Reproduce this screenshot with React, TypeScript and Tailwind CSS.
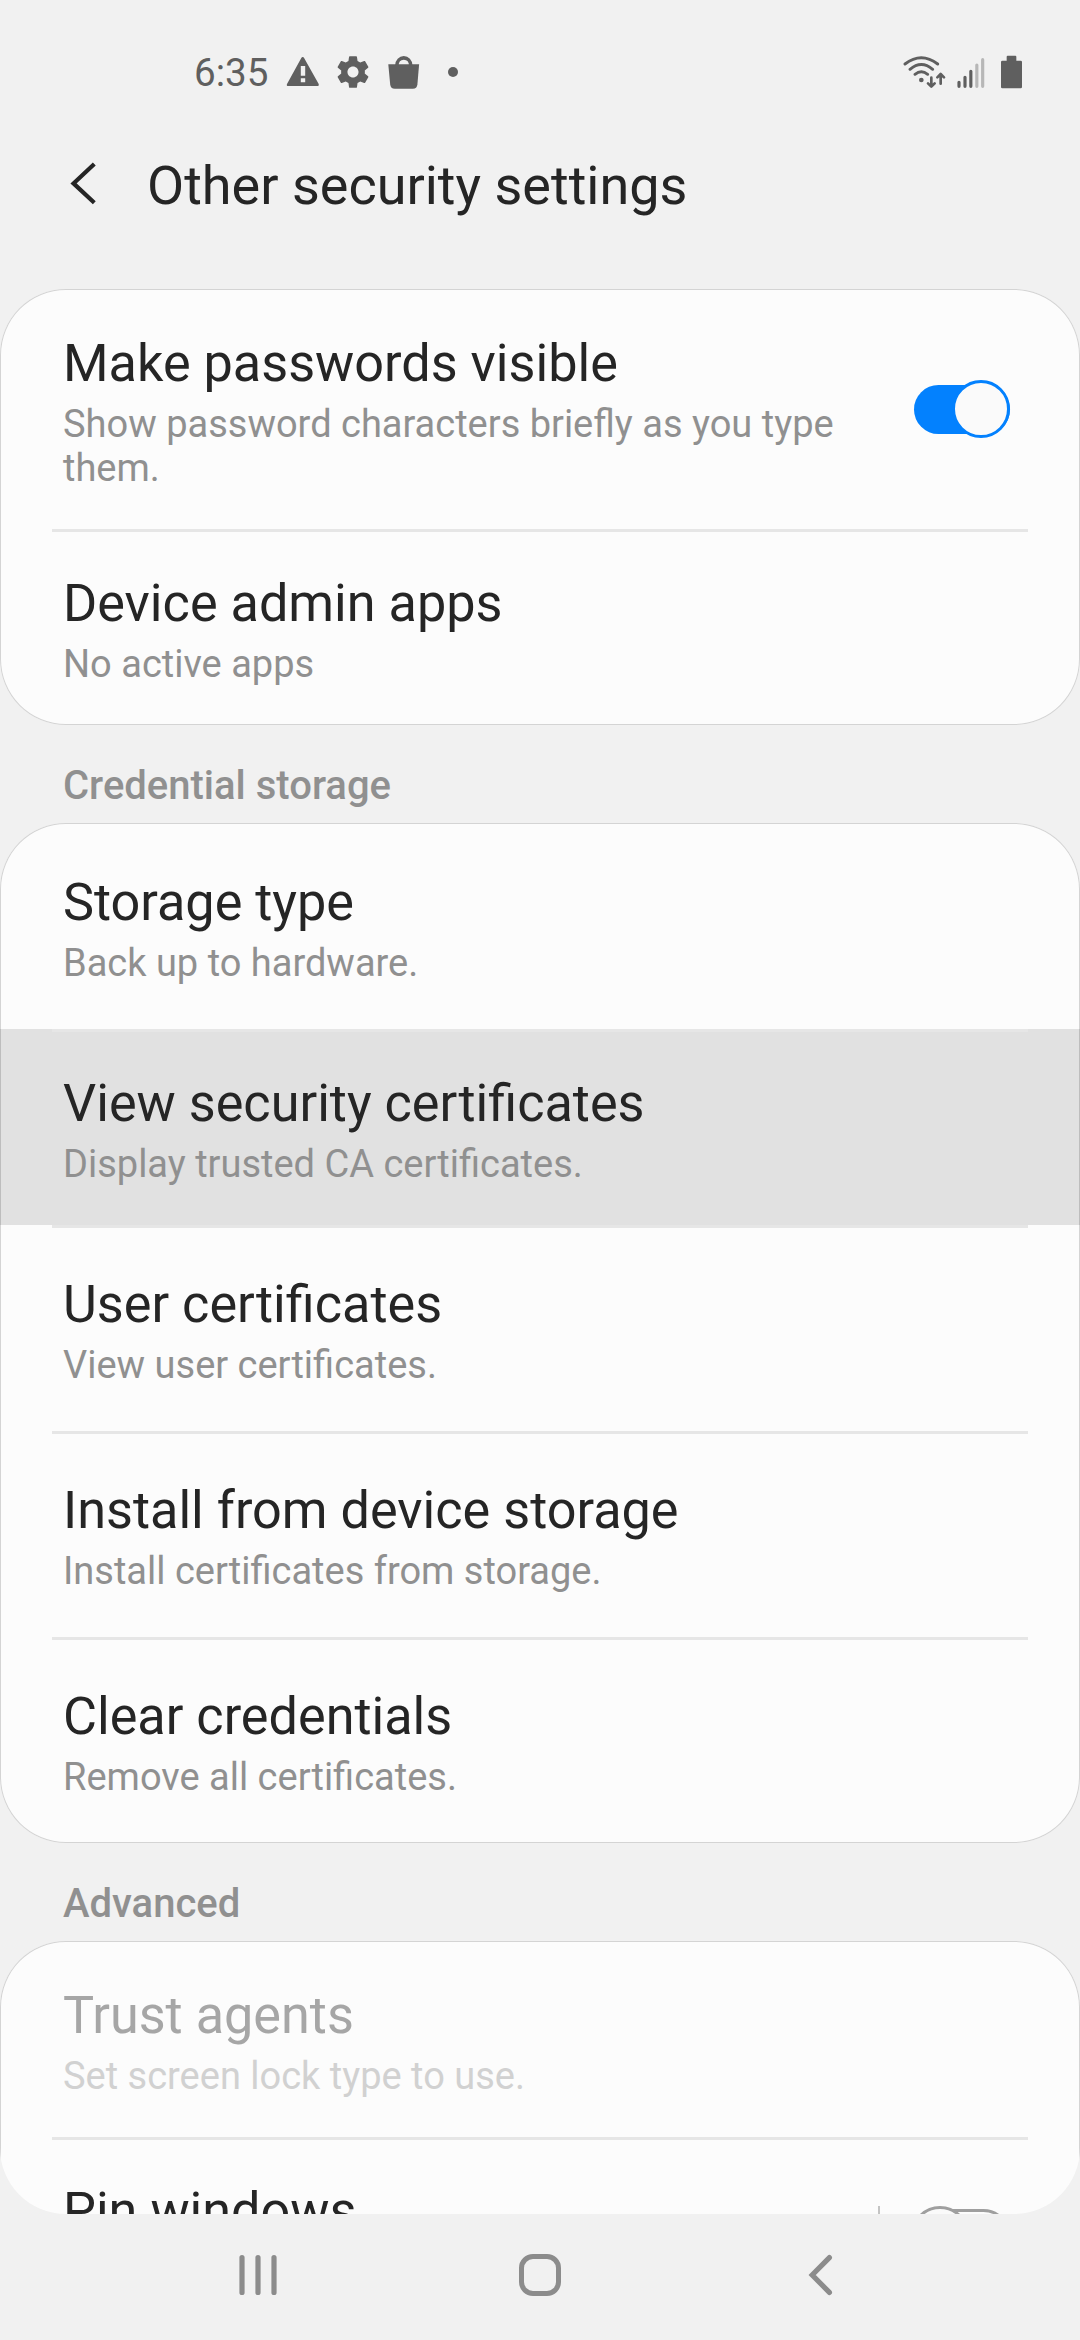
import type { ReactNode } from "react";

function StatusBar() {
  return (
    <header className="flex h-[132px] items-center justify-between pr-[58px] pl-[194px] pt-3 text-[#5f5f5f]">
      <div className="flex items-center">
        <span className="mt-[2px] w-[92px] text-[38.6px] leading-[46px]">6:35</span>
        <svg className="h-[36px] w-[34px]" viewBox="286 54 34 36" fill="currentColor">
          <path
            fillRule="evenodd"
            d="M302.7 57 Q303.6 57 304.1 58 L318.7 84 Q319.4 86 317.8 86 H288.2 Q286.2 86 287 84 L301.3 58 Q301.8 57 302.7 57 Z M300.8 66 V75.8 H305.2 V66 Z M300.8 78.2 V82.2 H305.2 V78.2 Z"
          />
        </svg>
        <svg className="ml-[14px] h-[38px] w-[38px]" viewBox="0 0 24 24" fill="currentColor">
          <path d="M19.43 12.98c.04-.32.07-.64.07-.98s-.03-.66-.07-.98l2.11-1.65c.19-.15.24-.42.12-.64l-2-3.46c-.12-.22-.39-.3-.61-.22l-2.49 1c-.52-.4-1.08-.73-1.69-.98l-.38-2.65C14.46 2.18 14.25 2 14 2h-4c-.25 0-.46.18-.49.42l-.38 2.65c-.61.25-1.17.59-1.69.98l-2.49-1c-.23-.09-.49 0-.61.22l-2 3.46c-.13.22-.07.49.12.64l2.11 1.65c-.04.32-.07.65-.07.98s.03.66.07.98l-2.11 1.65c-.19.15-.24.42-.12.64l2 3.46c.12.22.39.3.61.22l2.49-1c.52.4 1.08.73 1.69.98l.38 2.65c.03.24.24.42.49.42h4c.25 0 .46-.18.49-.42l.38-2.65c.61-.25 1.17-.59 1.69-.98l2.49 1c.23.09.49 0 .61-.22l2-3.46c.12-.22.07-.49-.12-.64l-2.11-1.65zM12 15.5c-1.93 0-3.5-1.57-3.5-3.5s1.57-3.5 3.5-3.5 3.5 1.57 3.5 3.5-1.57 3.5-3.5 3.5z" />
        </svg>
        <svg className="ml-[16px] h-[36px] w-[32px]" viewBox="388 54 32 36" fill="currentColor">
          <path d="M388.3 64.3 H419.1 L417.4 84.5 Q417 88.7 412.8 88.7 H394.8 Q390.6 88.7 390.2 84.5 Z" />
          <path d="M396.8 66 C396.8 55.2 410.8 55.2 410.8 66" fill="none" stroke="currentColor" strokeWidth="3.6" />
        </svg>
        <span className="ml-[28px] h-[10px] w-[10px] rounded-full bg-[#5f5f5f]" />
      </div>
      <div className="flex items-center">
        <svg className="h-[34px] w-[43px]" viewBox="69 43 129 102" fill="none" stroke="currentColor" strokeWidth="8.6" strokeLinecap="round">
          <path d="M75 70 Q124 32 173 70 M90 86 Q124 57 158 86 M105 101 Q124 86 143 101" />
          <circle cx="124" cy="118" r="7" fill="currentColor" stroke="none" />
          <path d="M154 111 V136 M144 128 L154 138 L164 128 M182 129 V102 M172 110 L182 100 L192 110" strokeLinejoin="round" strokeWidth="8" />
        </svg>
        <svg className="ml-[11px] h-[34px] w-[28px]" viewBox="230 43 84 102" fill="none" strokeWidth="9.5" strokeLinecap="round" stroke="currentColor">
          <path d="M236 125 V137 M254 110 V137 M271.5 92 V137" />
          <path d="M289.5 73 V137 M307 57 V137" className="stroke-[#b7b7b7]" />
        </svg>
        <svg className="ml-[16px] h-[34px] w-[21px]" viewBox="363 43 63 102" fill="currentColor">
          <path d="M383 45 H406 Q409 45 409 48 V60 H422 Q426 60 426 64 V139 Q426 143 422 143 H367 Q363 143 363 139 V64 Q363 60 367 60 H380 V48 Q380 45 383 45 Z" />
        </svg>
      </div>
    </header>
  );
}

function TitleBar() {
  return (
    <div className="flex h-[157px] items-start pt-[19px] pl-[68px]">
      <svg className="mt-[8px] h-[50px] w-[34px]" viewBox="68 159 34 50" fill="none" stroke="#252525" strokeWidth="4.2">
        <path d="M94.3 164 L73.5 183.4 L94.3 202.8" />
      </svg>
      <h1 className="mt-[2px] ml-[45px] text-[54px] leading-[66px] text-[#252525]">Other security settings</h1>
    </div>
  );
}

function Toggle({ on = false }: { on?: boolean }) {
  if (on) {
    return (
      <div className="flex h-[58px] w-[96px] items-center">
        <div className="flex h-[49px] w-[96px] items-center justify-end rounded-full bg-[#0381fe]">
          <div className="h-[58px] w-[58px] shrink-0 rounded-full border-[3px] border-[#0381fe] bg-[#fafafa]" />
        </div>
      </div>
    );
  }
  return (
    <div className="flex h-[58px] w-[96px] items-center">
      <div className="flex h-[53px] w-[96px] items-center rounded-full border-[3px] border-[#9f9f9f]">
        <div className="-ml-[6px] h-[58px] w-[58px] shrink-0 rounded-full border-[3px] border-[#9f9f9f] bg-[#fafafa]" />
      </div>
    </div>
  );
}

type RowProps = {
  title: string;
  sub?: string;
  divider?: boolean;
  tall?: boolean;
  pressed?: boolean;
  disabled?: boolean;
  children?: ReactNode;
};

function Row({ title, sub, divider, tall, pressed, disabled, children }: RowProps) {
  return (
    <div className={pressed ? "bg-black/[0.107]" : ""}>
      {divider && <div className="mx-[52px] -mb-[3px] h-[3px] bg-[#e6e6e6]" />}
      <div className="flex items-center justify-between pr-[70px] pl-[63px]">
        <div className={tall ? "max-w-[820px] pt-[49px] pb-[44px]" : "max-w-[820px] pt-[44px] pb-[39px]"}>
          <div className={`text-[52.2px] leading-[62px] ${disabled ? "text-[#a6a6a6]" : "text-[#252525]"}`}>{title}</div>
          <div className={`mt-[7px] min-h-[44px] text-[38px] leading-[44px] ${disabled ? "text-[#d1d1d1]" : "text-[#909090]"}`}>{sub}</div>
        </div>
        {children}
      </div>
    </div>
  );
}

function Card({ children }: { children: ReactNode }) {
  return (
    <section className="rounded-[66px] bg-[#fcfcfc] shadow-[inset_0_0_0_1px_#d4d4d4]">{children}</section>
  );
}

function SectionLabel({ children }: { children: ReactNode }) {
  return (
    <h2 className="h-[98px] pt-[38px] pl-[63px] text-[40px] leading-[46px] font-medium text-[#909090]">{children}</h2>
  );
}

function NavBar() {
  return (
    <nav className="flex h-[126px] items-start justify-between px-[238px] pt-[40px] text-[#8c8c8c]">
      <svg className="h-[42px] w-[42px]" viewBox="237 2254 42 42" stroke="currentColor" strokeWidth="5.2" strokeLinecap="round">
        <path d="M241 2257.6 V2292.4 M257 2257.6 V2292.4 M273 2257.6 V2292.4" />
      </svg>
      <div className="h-[42px] w-[42px] rounded-[14px] border-[5px] border-[#8c8c8c]" />
      <svg className="h-[42px] w-[42px]" viewBox="800 2254 42 42" fill="none" stroke="currentColor" strokeWidth="5.2" strokeLinecap="round">
        <path d="M829.4 2257.6 L812.2 2275 L829.4 2292.4" />
      </svg>
    </nav>
  );
}

export default function App() {
  return (
    <div className="flex h-[2340px] w-[1080px] flex-col overflow-hidden bg-[#f1f1f1] font-[Roboto,sans-serif]">
      <StatusBar />
      <TitleBar />
      <main className="h-[1925px] overflow-hidden rounded-b-[66px]">
        <Card>
          <Row title="Make passwords visible" sub="Show password characters briefly as you type them.">
            <Toggle on />
          </Row>
          <Row divider title="Device admin apps" sub="No active apps" />
        </Card>
        <SectionLabel>Credential storage</SectionLabel>
        <Card>
          <Row tall title="Storage type" sub="Back up to hardware." />
          <Row divider pressed title="View security certificates" sub="Display trusted CA certificates." />
          <Row divider tall title="User certificates" sub="View user certificates." />
          <Row divider tall title="Install from device storage" sub="Install certificates from storage." />
          <Row divider tall title="Clear credentials" sub="Remove all certificates." />
        </Card>
        <SectionLabel>Advanced</SectionLabel>
        <Card>
          <Row disabled title="Trust agents" sub="Set screen lock type to use." />
          <Row divider title="Pin windows">
            <div className="flex items-center gap-[34px]">
              <div className="h-[58px] w-[2px] bg-[#c4c4c4]" />
              <Toggle />
            </div>
          </Row>
        </Card>
      </main>
      <NavBar />
    </div>
  );
}
